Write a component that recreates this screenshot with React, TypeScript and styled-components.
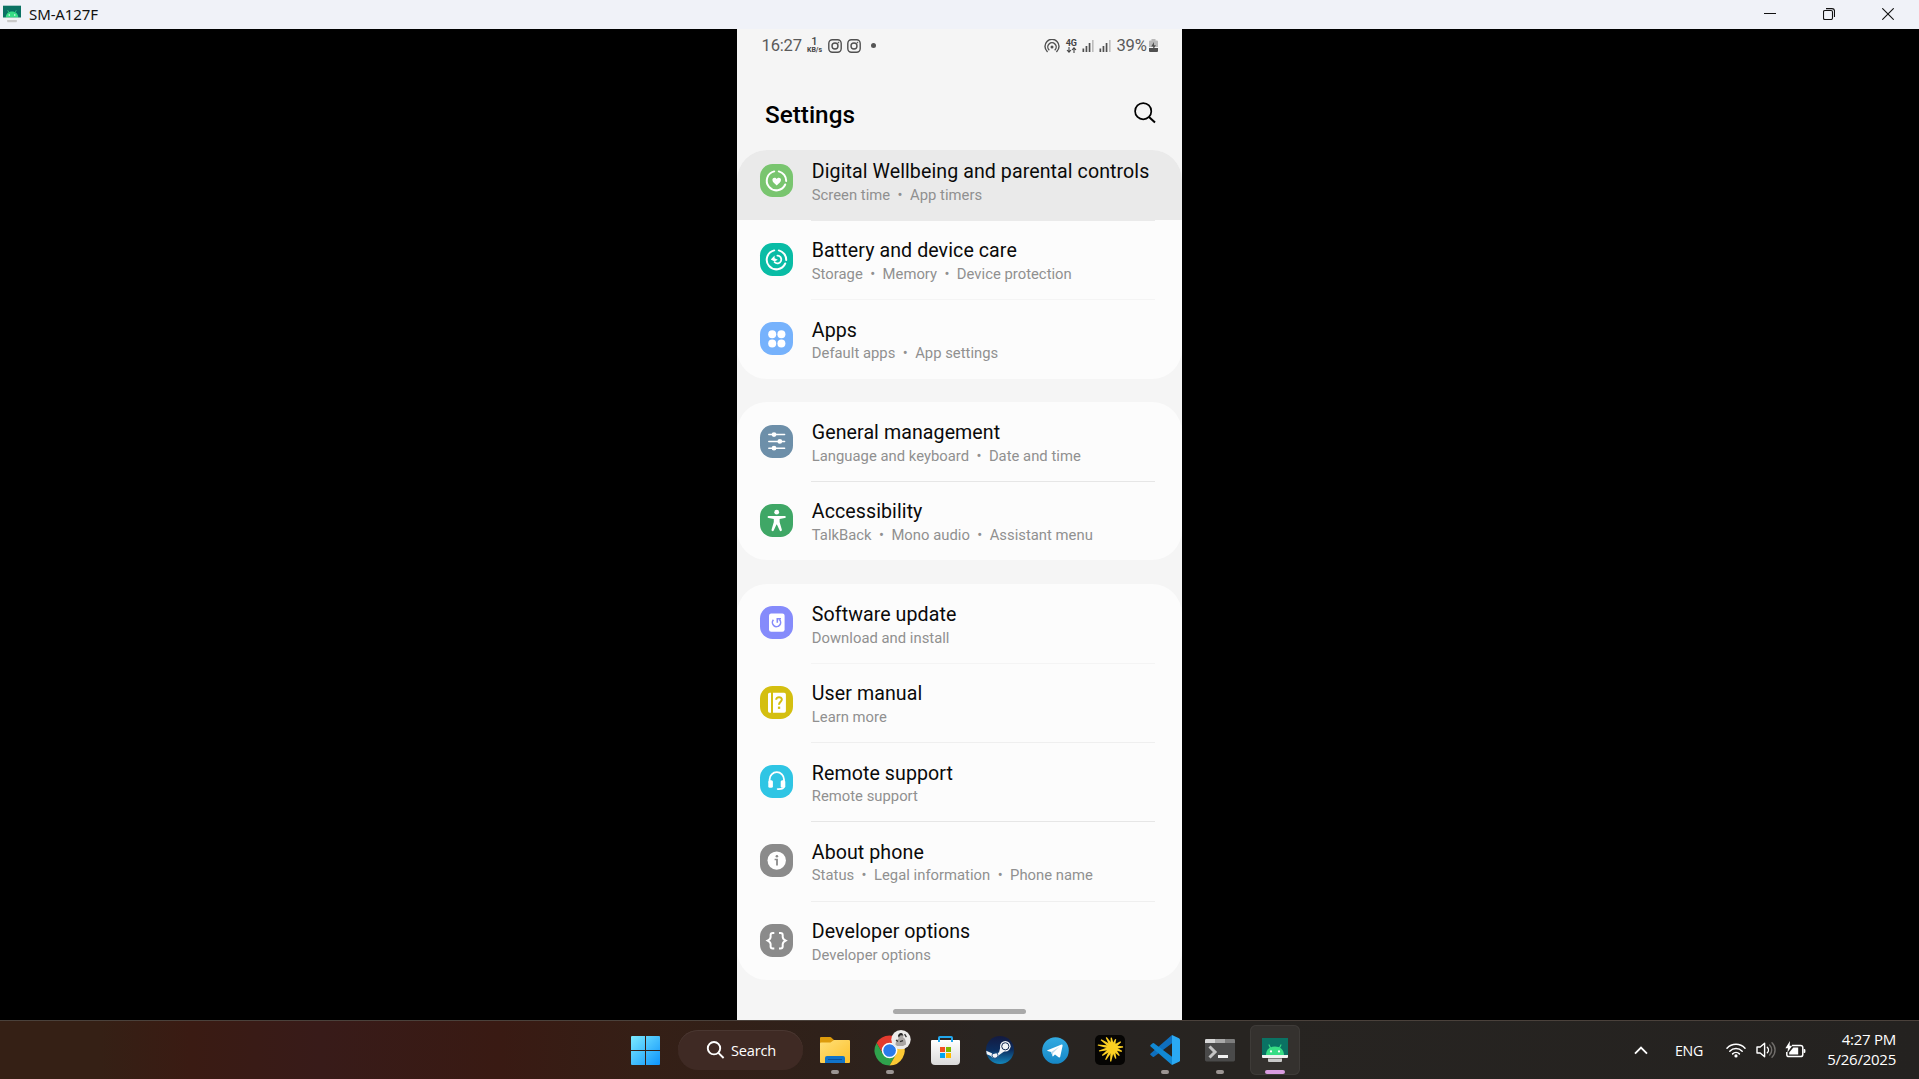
import React from 'react';
import styled, { createGlobalStyle } from 'styled-components';

const Global = createGlobalStyle`
  * { box-sizing: border-box; }
  html, body { margin: 0; padding: 0; background: #000; overflow: hidden; }
  svg { display: block; flex: none; }
`;

const Desktop = styled.div`
  width: 1919px;
  height: 1079px;
  display: flex;
  flex-direction: column;
  background: #000;
  font-family: "Open Sans", "Noto Sans", sans-serif;
`;

const TitleBar = styled.header`
  height: 29px;
  flex: none;
  display: flex;
  align-items: center;
  padding: 0 25px 1px 3px;
  background: #f0f2f8;
  color: #111;
`;
const WindowTitle = styled.span`
  margin-left: 8px;
  font-family: "Noto Sans", sans-serif;
  font-size: 15px;
  line-height: 20px;
  letter-spacing: -0.1px;
  flex: 1;
`;
const WindowControls = styled.div`
  display: flex;
  align-items: center;
  gap: 47px;
`;

const Stage = styled.main`
  flex: 1;
  min-height: 0;
  display: flex;
  justify-content: center;
`;
const Phone = styled.section`
  width: 445px;
  display: flex;
  flex-direction: column;
  background: #f5f5f5;
  font-family: Roboto, sans-serif;
`;

const StatusBar = styled.div`
  height: 33px;
  flex: none;
  display: flex;
  align-items: center;
  justify-content: space-between;
  padding: 0 24.5px 0 24.5px;
  color: #5a5a5a;
  font-size: 16.6px;
`;
const StatusGroup = styled.div<{ $gap: number }>`
  display: flex;
  align-items: center;
  gap: ${(p) => p.$gap}px;
`;
const Clock = styled.span`
  width: 40px;
  line-height: 20px;
  letter-spacing: -0.2px;
`;
const Percent = styled.span`
  line-height: 20px;
  letter-spacing: -0.3px;
`;
const Speed = styled.div`
  display: flex;
  flex-direction: column;
  align-items: center;
  width: 16px;
  font-weight: 500;
  color: #444;
`;
const SpeedValue = styled.span`
  font-size: 11px;
  line-height: 10px;
`;
const SpeedUnit = styled.span`
  font-size: 7px;
  font-weight: 700;
  line-height: 7px;
`;
const NetGroup = styled.div`
  display: flex;
  flex-direction: column;
  align-items: center;
  width: 11px;
  font-weight: 700;
  font-size: 9px;
  line-height: 8px;
  letter-spacing: -0.3px;
  color: #444;
`;
const Dot = styled.i`
  width: 5px;
  height: 5px;
  margin-left: 5.5px;
  border-radius: 50%;
  background: #555;
`;

const PageHeader = styled.div`
  height: 88px;
  flex: none;
  display: flex;
  align-items: center;
  justify-content: space-between;
  padding: 14px 26px 0 28px;
`;
const PageTitle = styled.h1`
  margin: 0;
  padding-top: 3px;
  font-size: 24.3px;
  font-weight: 500;
  line-height: 30px;
  color: #000;
`;

const Groups = styled.div`
  display: flex;
  flex-direction: column;
  gap: 23.2px;
`;
const Card = styled.div`
  overflow: hidden;
  border-radius: 30px;
  background: #fcfcfc;
`;
const Row = styled.div<{ $pressed?: boolean }>`
  height: ${(p) => (p.$pressed ? 70 : 79.3)}px;
  display: flex;
  align-items: flex-start;
  padding: ${(p) => (p.$pressed ? 14 : 22.8)}px 27.2px 0 23.4px;
  background: ${(p) => (p.$pressed ? '#eaeaea' : 'transparent')};
`;
const Tile = styled.div<{ $color: string }>`
  width: 33px;
  height: 33px;
  flex: none;
  border-radius: 12.5px;
  background: ${(p) => p.$color};
`;
const RowBody = styled.div<{ $line?: string; $pressed?: boolean }>`
  flex: 1;
  height: ${(p) => (p.$pressed ? 70 : 79.3)}px;
  margin: ${(p) => (p.$pressed ? -14 : -22.8)}px 0 0 17.6px;
  padding: ${(p) => (p.$pressed ? 9 : 18.4)}px 0 0 0.8px;
  white-space: nowrap;
  border-top: 1px solid ${(p) => p.$line || 'transparent'};
`;
const RowTitle = styled.div`
  font-size: 19.6px;
  line-height: 24px;
  letter-spacing: 0.08px;
  color: #0a0a0a;
`;
const RowHint = styled.div`
  font-size: 14.8px;
  line-height: 18px;
  letter-spacing: 0.02px;
  margin-top: 1.6px;
  color: #909090;
  display: flex;
`;
const Bullet = styled.span`
  width: 19.8px;
  text-align: center;
`;
const NavArea = styled.div`
  flex: 1;
  display: flex;
  align-items: flex-end;
  justify-content: center;
  padding-bottom: 6px;
`;
const NavHandle = styled.div`
  width: 133px;
  height: 5px;
  border-radius: 3px;
  background: #a9a9a9;
`;

const Taskbar = styled.footer`
  height: 59px;
  flex: none;
  display: flex;
  align-items: center;
  border-top: 1px solid #4a413b;
  background: linear-gradient(90deg, #352015 0, #352015 100px, #3a1b13 190px, #381b19 320px, #391a13 500px, #351f16 640px, #2f211a 820px, #292421 980px, #272421 1250px, #242220 1919px);
  color: #fff;
`;
const TaskCenter = styled.div`
  display: flex;
  align-items: center;
  margin-left: 618px;
`;
const TaskItem = styled.div<{ $active?: boolean }>`
  width: ${(p) => (p.$active ? 50 : 55)}px;
  margin-left: ${(p) => (p.$active ? 2.5 : 0)}px;
  height: 50px;
  flex: none;
  display: flex;
  align-items: center;
  justify-content: center;
  position: relative;
  border-radius: 6px;
  background: ${(p) => (p.$active ? '#34312e' : 'transparent')};
  box-shadow: ${(p) => (p.$active ? 'inset 0 0 0 1px #3e3b38' : 'none')};
`;
const Running = styled.i<{ $active?: boolean }>`
  position: absolute;
  bottom: 1px;
  left: 50%;
  transform: translateX(-50%);
  width: ${(p) => (p.$active ? 20 : 8)}px;
  height: 4px;
  border-radius: 2px;
  background: ${(p) => (p.$active ? '#d99ce0' : '#9c9593')};
`;
const SearchBox = styled.div`
  width: 125px;
  height: 40px;
  display: flex;
  align-items: center;
  gap: 6px;
  padding-left: 28px;
  margin: 0 4.5px 0 5px;
  border-radius: 20px;
  background: #3f2a24;
  box-shadow: inset 0 1px 0 #4a3731;
  font-size: 14.6px;
  letter-spacing: -0.2px;
`;
const Tray = styled.div`
  display: flex;
  align-items: center;
  margin-left: auto;
  padding-right: 23px;
`;
const Language = styled.span`
  margin: 0 21px 0 27px;
  width: 30px;
  font-size: 14.2px;
  letter-spacing: -0.3px;
`;
const TrayIcons = styled.div`
  display: flex;
  align-items: center;
  gap: 9.5px;
`;
const DateTime = styled.div`
  width: 90px;
  padding-bottom: 2px;
  text-align: right;
  font-size: 15px;
  line-height: 20px;
  letter-spacing: -0.25px;
`;

/* ---------- status bar glyphs ---------- */

const Insta = () => (
  <svg width="14" height="14" viewBox="0 0 14 14" fill="none" stroke="#505050" strokeWidth="1.4">
    <rect x="0.8" y="0.8" width="12.4" height="12.4" rx="3.6" />
    <circle cx="7" cy="7" r="3" />
    <circle cx="10.4" cy="3.6" r="0.5" fill="#505050" strokeWidth="0.6" />
  </svg>
);
const Hotspot = () => (
  <svg width="16" height="14" viewBox="0 0 16 14" fill="none" stroke="#505050" strokeWidth="1.4" strokeLinecap="round">
    <path d="M3.2 12.4A7 7 0 1 1 12.8 12.4" />
    <path d="M4.9 10.8A4.2 4.2 0 1 1 11.1 10.8" />
    <circle cx="8" cy="8" r="1.5" fill="#505050" stroke="none" />
  </svg>
);
const Arrows = () => (
  <svg width="11" height="6" viewBox="0 0 11 6" fill="none" stroke="#444" strokeWidth="1.1">
    <path d="M3 0V5M1 3L3 5.2L5 3M8 6V1M6 3L8 .8L10 3" />
  </svg>
);
const Signal = () => (
  <svg width="12" height="13" viewBox="0 0 12 13">
    <path d="M.5 9.5h1.7V13H.5zM3.6 7h1.7v6H3.6zM6.7 4h1.7v9H6.7z" fill="#505050" />
    <path d="M10 1h1.6v12H10z" fill="#bdbdbd" />
  </svg>
);
const PhoneBattery = () => (
  <svg width="9" height="13" viewBox="0 0 9 13">
    <path d="M2.5 0h4v1.5H8A1 1 0 0 1 9 2.5V8H0V2.5A1 1 0 0 1 1 1.5h1.5z" fill="#b9b9b9" />
    <path d="M0 9h9v3a1 1 0 0 1-1 1H1a1 1 0 0 1-1-1z" fill="#505050" />
    <path d="M5 3L2.2 7.4H4.2V10.5L6.9 6.2H5z" fill="#505050" />
  </svg>
);
const Magnifier = () => (
  <svg width="22" height="22" viewBox="0 0 22 22" fill="none" stroke="#000" strokeWidth="1.7">
    <circle cx="9.2" cy="9.2" r="8.1" />
    <path d="M15 15l6 5.6" strokeWidth="2" />
  </svg>
);

/* ---------- settings tiles, drawn on a 33px grid ---------- */

const tileArt: Record<string, React.ReactNode> = {
  wellbeing: (
    <g fill="none" stroke="#fff" strokeWidth="2">
      <path d="M14.2 7.4A9.6 9.6 0 1 0 25.2 20.5" strokeLinecap="round" />
      <path d="M18.8 7.4A9.6 9.6 0 0 1 26.2 17" strokeLinecap="round" />
      <path d="M16.7 21.4C14 19.2 12.4 17.8 12.4 15.8C12.4 13.4 15.5 12.8 16.7 15C17.9 12.8 21 13.4 21 15.8C21 17.8 19.4 19.2 16.7 21.4Z" fill="#fff" stroke="none" />
    </g>
  ),
  battery: (
    <g fill="none" stroke="#fff" strokeWidth="2">
      <path d="M14.2 7.4A9.6 9.6 0 1 0 25.2 20.5" strokeLinecap="round" />
      <path d="M18.8 7.4A9.6 9.6 0 0 1 26.2 17" strokeLinecap="round" />
      <path d="M17.4 12.6A3.9 3.9 0 1 1 14.6 19.2" strokeLinecap="round" strokeWidth="1.8" />
      <path d="M10.8 16.4L14.6 12.6V15.2L17.8 16.8L14.6 18.4Z" fill="#fff" stroke="none" />
    </g>
  ),
  apps: (
    <g fill="#fff">
      <circle cx="12.2" cy="12.3" r="4" />
      <circle cx="21.4" cy="12.3" r="4" />
      <circle cx="12.2" cy="21.5" r="4" />
      <circle cx="21.4" cy="21.5" r="4" />
    </g>
  ),
  general: (
    <g stroke="#fff" strokeWidth="1.5" strokeLinecap="round" fill="#fff">
      <path d="M8.8 9.6H24.6M8.8 16.4H24.6M8.8 23.2H24.6" />
      <g stroke="none">
        <circle cx="14" cy="9.6" r="2.4" />
        <circle cx="19.8" cy="16.4" r="2.4" />
        <circle cx="14" cy="23.2" r="2.4" />
      </g>
    </g>
  ),
  access: (
    <g fill="#fff">
      <circle cx="16.7" cy="8.2" r="2.4" />
      <path d="M8.6 12H24.8a.9.9 0 0 1 0 2L19.6 15V18L21.8 25.6a1.1 1.1 0 0 1-2.1.8L16.9 20.6H16.5L13.7 26.4a1.1 1.1 0 0 1-2.1-.8L13.8 18V15L8.6 14a.9.9 0 0 1 0-2Z" />
    </g>
  ),
  update: (
    <g>
      <rect x="9" y="7.6" width="15.6" height="18.2" rx="2.2" fill="#fff" />
      <g fill="none" stroke="#858bfb" strokeWidth="1.6">
        <path d="M13.4 13.8A4.1 4.1 0 1 0 19.2 13.4" />
        <path d="M21 12.8H17.3V16.8" />
      </g>
    </g>
  ),
  manual: (
    <g>
      <path d="M9.6 6.7H11V26.7H9.6a1.6 1.6 0 0 1-1.6-1.6V8.3a1.6 1.6 0 0 1 1.6-1.6Z" fill="#fff" />
      <path d="M13 6.7H24.2A1.7 1.7 0 0 1 25.9 8.4V25a1.7 1.7 0 0 1-1.7 1.7H13Z" fill="#fff" />
      <path d="M16.2 13.8C16.2 10.2 22 10.4 21.8 13.8C21.7 15.8 19 16 19 18.8" fill="none" stroke="#d4bf10" strokeWidth="2" />
      <rect x="17.9" y="20.6" width="2.3" height="2.3" fill="#d4bf10" />
    </g>
  ),
  remote: (
    <g fill="none" stroke="#fff" strokeWidth="1.8">
      <path d="M9.6 18V14.4A7.2 7.2 0 0 1 24 14.4V18" />
      <path d="M24.2 21C24 23.6 22.6 24.2 17.6 24.1" strokeWidth="1.6" strokeLinecap="round" />
      <rect x="8.3" y="15.2" width="4.6" height="7.6" rx="1.6" fill="#fff" stroke="none" />
      <rect x="20.7" y="15.2" width="4.6" height="7.6" rx="1.6" fill="#fff" stroke="none" />
    </g>
  ),
  about: (
    <g>
      <circle cx="16.7" cy="16.6" r="9.2" fill="#fff" />
      <g fill="#8b8b8b">
        <circle cx="16.9" cy="12.2" r="1.3" />
        <path d="M14.6 14.8H17.9V21.6H16.1V16.3H14.6Z" />
      </g>
    </g>
  ),
  developer: (
    <g fill="none" stroke="#fff" strokeWidth="2">
      <path d="M14.3 8.9H12.8Q10.6 8.9 10.6 11V13Q10.6 15 7.6 16.6Q10.6 18.2 10.6 20.2V22.4Q10.6 24.4 12.8 24.4H14.3" />
      <path d="M19 8.9H20.5Q22.7 8.9 22.7 11V13Q22.7 15 25.7 16.6Q22.7 18.2 22.7 20.2V22.4Q22.7 24.4 20.5 24.4H19" />
    </g>
  ),
};

/* ---------- taskbar logos ---------- */

const AndroidScreen = ({ size }: { size: number }) => (
  <svg width={size} height={size} viewBox="0 0 26 26">
    <rect x="0" y="1" width="26" height="18" fill="#0a7263" />
    <path d="M4 18C4 12.5 8 9.4 13 9.4S22 12.5 22 18Z" fill="#37dd85" />
    <path d="M6.8 7.6L8.6 11M19.2 7.6L17.4 11" stroke="#37dd85" strokeWidth="1.1" />
    <circle cx="9" cy="14.4" r="1.1" fill="#fff" />
    <circle cx="17" cy="14.4" r="1.1" fill="#fff" />
    <path d="M0 18H26V20A1 1 0 0 1 25 21H1A1 1 0 0 1 0 20Z" fill="#f1f1f1" />
    <path d="M6 21.5H20V24A1 1 0 0 1 19 25H7A1 1 0 0 1 6 24Z" fill="#c9c9c9" />
  </svg>
);
const WindowsLogo = () => (
  <svg width="29" height="29" viewBox="0 0 29 29">
    <defs>
      <linearGradient id="win" x1="0" y1="0" x2="29" y2="29" gradientUnits="userSpaceOnUse">
        <stop offset="0" stopColor="#7cebff" />
        <stop offset="1" stopColor="#0d93fb" />
      </linearGradient>
    </defs>
    <path d="M1 0H14V14H0V1A1 1 0 0 1 1 0ZM15 0H28A1 1 0 0 1 29 1V14H15ZM0 15H14V29H1A1 1 0 0 1 0 28ZM15 15H29V28A1 1 0 0 1 28 29H15Z" fill="url(#win)" />
  </svg>
);
const Explorer = () => (
  <svg width="30" height="26" viewBox="0 0 30 26">
    <defs>
      <linearGradient id="fold" x1="0" y1="0" x2="1" y2="1">
        <stop offset="0" stopColor="#ffdf78" />
        <stop offset="1" stopColor="#fdc12c" />
      </linearGradient>
    </defs>
    <path d="M0 1A1 1 0 0 1 1 0H10Q11 0 12 1.2L14 3H29V8H0Z" fill="#dd9b0c" />
    <path d="M0 6.5Q0 5.5 1 5.5H10.5L14 3H29A1 1 0 0 1 30 4V25A1 1 0 0 1 29 26H1A1 1 0 0 1 0 25Z" fill="url(#fold)" />
    <path d="M5 26V21A2 2 0 0 1 7 19H23A2 2 0 0 1 25 21V26Z" fill="#1173c8" />
    <path d="M8 22.5H22" stroke="#0b519b" strokeWidth="1" />
  </svg>
);
const Chrome = () => (
  <svg width="42" height="42" viewBox="-4 -0.6 42 42">
    <path d="M3.6 13.4A15 15 0 0 1 29.6 13.4H16.6L10.1 24.65Z" fill="#e33b2e" />
    <path d="M3.6 13.4A15 15 0 0 0 16.6 35.9L23.1 24.65H10.1Z" fill="#2fa24c" />
    <path d="M29.6 13.4A15 15 0 0 1 16.6 35.9L23.1 24.65L16.6 13.4Z" fill="#fcc934" />
    <circle cx="16.6" cy="20.9" r="7.8" fill="#fff" />
    <circle cx="16.6" cy="20.9" r="6.3" fill="#2b7bea" />
    <circle cx="28" cy="10" r="9.7" fill="#ecebea" />
    <path d="M25.4 6Q26.4 3 29 3.4Q31 4.4 30.2 8Q33 9 33 15L30 16.5H24L22.4 15Q23 10.4 25.6 9Z" fill="#aaa6a4" />
    <path d="M25 6Q26 2.6 29 3.6L30.4 6L27.6 5.6L25.6 8Z" fill="#252525" />
    <path d="M31.6 4.5L33.4 7.5M23 10.5L25 12M27 12L30 11" stroke="#333" strokeWidth="1.3" />
  </svg>
);
const Store = () => (
  <svg width="29" height="29" viewBox="0 0 29 29">
    <defs>
      <linearGradient id="bag" x1="0" y1="0" x2="0" y2="1">
        <stop offset="0" stopColor="#fff" />
        <stop offset="1" stopColor="#dadada" />
      </linearGradient>
    </defs>
    <path d="M0 5A1 1 0 0 1 1 4H28A1 1 0 0 1 29 5V25A4 4 0 0 1 25 29H4A4 4 0 0 1 0 25Z" fill="url(#bag)" />
    <path d="M8 6V1.8Q8 1 8.8 1H20.2Q21 1 21 1.8V6" fill="none" stroke="#22a7ec" strokeWidth="2" />
    <path d="M9 11h5v5H9z" fill="#f25022" />
    <path d="M15 11h5v5H15z" fill="#7fba00" />
    <path d="M9 17h5v5H9z" fill="#00a4ef" />
    <path d="M15 17h5v5H15z" fill="#ffb900" />
  </svg>
);
const Steam = () => (
  <svg width="28" height="28" viewBox="0 0 28 28">
    <defs>
      <linearGradient id="stm" x1="0" y1="0" x2="0" y2="1">
        <stop offset="0" stopColor="#141a40" />
        <stop offset="0.5" stopColor="#0c2d5e" />
        <stop offset="1" stopColor="#1387bd" />
      </linearGradient>
    </defs>
    <circle cx="14" cy="14" r="14" fill="url(#stm)" />
    <path d="M.2 14.8L7.6 17.9L13 16.4L14.4 11L19.5 14.5L12.8 19.2A4.2 4.2 0 0 1 5 20L.8 18.2Z" fill="#f3f5f7" />
    <circle cx="19.3" cy="10.3" r="5.3" fill="#f3f5f7" />
    <circle cx="19.3" cy="10.3" r="3.6" fill="none" stroke="#14284f" strokeWidth="1" />
    <circle cx="9" cy="19.3" r="3" fill="none" stroke="#14447a" strokeWidth="0.9" />
  </svg>
);
const Telegram = () => (
  <svg width="27" height="27" viewBox="0 0 27 27">
    <defs>
      <linearGradient id="tg" x1="0" y1="0" x2="0" y2="1">
        <stop offset="0" stopColor="#33abe2" />
        <stop offset="1" stopColor="#1687c6" />
      </linearGradient>
    </defs>
    <circle cx="13.5" cy="13.5" r="13.3" fill="url(#tg)" />
    <path d="M5.4 13.2L19.6 7.6Q20.8 7.4 20.6 8.8L18.2 19.8Q17.8 21 16.6 20.2L13 17.5L11.2 19.3Q10.6 19.8 10.4 18.8L9.2 15L5.6 13.9Q4.8 13.5 5.4 13.2Z" fill="#fff" />
    <path d="M9.2 15L17.3 9.8L11 15.9L10.6 19.2Z" fill="#b9d9ec" />
  </svg>
);

/* angle and length of each spike, clockwise from the right */
const rays: [number, number][] = [
  [-4, 10.5], [22, 10], [50, 10.5], [74, 11.5], [98, 14], [120, 14], [143, 13],
  [166, 14], [190, 15], [214, 14], [238, 12], [262, 10], [290, 9], [325, 10],
];
const Burst = () => (
  <svg width="30" height="30" viewBox="0 0 30 30">
    <rect width="30" height="30" rx="5" fill="#050403" />
    <g transform="translate(17.6 12.6)" fill="#fbcf22">
      <circle r="5.2" />
      {rays.map(([angle, length]) => (
        <path key={angle} d={`M0 -2L${length} -0.6V0.6L0 2Z`} transform={`rotate(${angle})`} />
      ))}
    </g>
  </svg>
);
const VsCode = () => (
  <svg width="30" height="30" viewBox="0 0 30 30">
    <path d="M22 0L29 3.2Q30 3.7 30 4.8V25.2Q30 26.3 29 26.8L22 30Z" fill="#2aa9f3" />
    <path d="M22 0V8.2L4 21.8Q3.4 22.3 2.7 21.8L.6 20Q-.2 19.2 .6 18.5Z" fill="#0f6fbe" />
    <path d="M22 30V21.8L4 8.2Q3.4 7.7 2.7 8.2L.6 10Q-.2 10.8 .6 11.5Z" fill="#1189d4" />
  </svg>
);
const Terminal = () => (
  <svg width="30" height="23" viewBox="0 0 30 23">
    <rect width="30" height="22.5" rx="1.4" fill="#4a4a4a" />
    <path d="M1.4 0H10V4H0V1.4A1.4 1.4 0 0 1 1.4 0Z" fill="#d6d6d6" />
    <path d="M10 0H20V4H10Z" fill="#a8a8a8" />
    <path d="M20 0H28.6A1.4 1.4 0 0 1 30 1.4V4H20Z" fill="#7d7d7d" />
    <path d="M4.5 7.5L10 13L4.5 18.5" fill="none" stroke="#c4c4c4" strokeWidth="3" />
    <path d="M13 16H23V19H13Z" fill="#f2f2f2" />
  </svg>
);
const TaskSearch = () => (
  <svg width="19" height="18" viewBox="0 0 19 18" fill="none" stroke="#fff" strokeWidth="1.9">
    <circle cx="8" cy="7.2" r="6.2" />
    <path d="M12.4 11.8L17.6 17" />
  </svg>
);
const Chevron = () => (
  <svg width="14" height="9" viewBox="0 0 14 9" fill="none" stroke="#fff" strokeWidth="1.9">
    <path d="M1 7.6L7 1.6L13 7.6" />
  </svg>
);
const Wifi = () => (
  <svg width="20" height="16" viewBox="0 0 20 16" fill="none" stroke="#fff" strokeWidth="1.5" strokeLinecap="round">
    <path d="M1 6.2A12.5 12.5 0 0 1 19 6.2" />
    <path d="M3.8 9.2A8.7 8.7 0 0 1 16.2 9.2" />
    <path d="M6.6 11.9A4.9 4.9 0 0 1 13.4 11.9" />
    <circle cx="10" cy="13.9" r="1.6" fill="#fff" stroke="none" />
  </svg>
);
const Speaker = () => (
  <svg width="20" height="18" viewBox="0 0 20 18" fill="none" stroke="#fff" strokeWidth="1.4" strokeLinecap="round" strokeLinejoin="round">
    <path d="M1 6H4.2L8.6 2.2V15.8L4.2 12H1Z" />
    <path d="M11.3 6.2A4 4 0 0 1 11.3 11.8" />
    <path d="M13.6 4A7 7 0 0 1 13.6 14M16 1.8A10 10 0 0 1 16 16.2" stroke="#716e6b" />
  </svg>
);
const Battery = () => (
  <svg width="21" height="18" viewBox="0 0 21 18">
    <path d="M7 4.4H15.6Q17.8 4.4 17.8 6.6V13.4Q17.8 15.6 15.6 15.6H4Q1.8 15.6 1.8 13.4V11" fill="none" stroke="#fff" strokeWidth="1.5" />
    <path d="M18.6 8H19.4Q20.4 8 20.4 9V11Q20.4 12 19.4 12H18.6Z" fill="#fff" />
    <path d="M8.3 6.6H13.2V13.4H4.2V11.4Z" fill="#fff" />
    <path d="M5 0L.4 7.2H3L2.4 11.4L7.2 4.8H4.6Z" fill="#fff" />
  </svg>
);

type Entry = { art: string; color: string; title: string; hint: string[]; line?: string; pressed?: boolean };

const groups: Entry[][] = [
  [
    { art: 'wellbeing', color: '#79c56f', title: 'Digital Wellbeing and parental controls', hint: ['Screen time', 'App timers'], pressed: true },
    { art: 'battery', color: '#09bca5', title: 'Battery and device care', hint: ['Storage', 'Memory', 'Device protection'], line: '#eaeaea' },
    { art: 'apps', color: '#76b2fc', title: 'Apps', hint: ['Default apps', 'App settings'], line: '#f4f4f4' },
  ],
  [
    { art: 'general', color: '#6d8fa9', title: 'General management', hint: ['Language and keyboard', 'Date and time'] },
    { art: 'access', color: '#3fa766', title: 'Accessibility', hint: ['TalkBack', 'Mono audio', 'Assistant menu'], line: '#e6e6e6' },
  ],
  [
    { art: 'update', color: '#858bfb', title: 'Software update', hint: ['Download and install'] },
    { art: 'manual', color: '#d4bf10', title: 'User manual', hint: ['Learn more'], line: '#f4f4f4' },
    { art: 'remote', color: '#2fc5e4', title: 'Remote support', hint: ['Remote support'], line: '#efefef' },
    { art: 'about', color: '#8b8b8b', title: 'About phone', hint: ['Status', 'Legal information', 'Phone name'], line: '#e6e6e6' },
    { art: 'developer', color: '#8b8b8b', title: 'Developer options', hint: ['Developer options'], line: '#efefef' },
  ],
];

const SettingRow = ({ art, color, title, hint, line, pressed }: Entry) => (
  <Row $pressed={pressed}>
    <Tile $color={color}>
      <svg width="33" height="33" viewBox="0 0 33 33">{tileArt[art]}</svg>
    </Tile>
    <RowBody $line={line} $pressed={pressed}>
      <RowTitle>{title}</RowTitle>
      <RowHint>
        {hint.map((h, i) => (
          <React.Fragment key={h}>
            {i > 0 && <Bullet>•</Bullet>}
            <span>{h}</span>
          </React.Fragment>
        ))}
      </RowHint>
    </RowBody>
  </Row>
);

export default function App() {
  return (
    <Desktop>
      <Global />
      <TitleBar>
        <AndroidScreen size={18} />
        <WindowTitle>SM-A127F</WindowTitle>
        <WindowControls>
          <svg width="12" height="12" viewBox="0 0 12 12"><path d="M0 5.5H12" stroke="#111" /></svg>
          <svg width="12" height="12" viewBox="0 0 12 12" fill="none" stroke="#111" strokeWidth="1.1">
            <rect x="0.5" y="2.5" width="9" height="9" rx="1.4" />
            <path d="M3 .6H9A2.5 2.5 0 0 1 11.5 3.1V9" />
          </svg>
          <svg width="12" height="12" viewBox="0 0 12 12"><path d="M.3 .3L11.7 11.7M11.7 .3L.3 11.7" stroke="#111" strokeWidth="1.1" /></svg>
        </WindowControls>
      </TitleBar>

      <Stage>
        <Phone>
          <StatusBar>
            <StatusGroup $gap={5}>
              <Clock>16:27</Clock>
              <Speed>
                <SpeedValue>1</SpeedValue>
                <SpeedUnit>KB/s</SpeedUnit>
              </Speed>
              <Insta />
              <Insta />
              <Dot />
            </StatusGroup>
            <StatusGroup $gap={5.3}>
              <Hotspot />
              <NetGroup>
                4G
                <Arrows />
              </NetGroup>
              <Signal />
              <Signal />
              <StatusGroup $gap={2}>
                <Percent>39%</Percent>
                <PhoneBattery />
              </StatusGroup>
            </StatusGroup>
          </StatusBar>
          <PageHeader>
            <PageTitle>Settings</PageTitle>
            <Magnifier />
          </PageHeader>
          <Groups>
            {groups.map((g, i) => (
              <Card key={i}>
                {g.map((e) => <SettingRow key={e.title} {...e} />)}
              </Card>
            ))}
          </Groups>
          <NavArea><NavHandle /></NavArea>
        </Phone>
      </Stage>

      <Taskbar>
        <TaskCenter>
          <TaskItem><WindowsLogo /></TaskItem>
          <SearchBox><TaskSearch />Search</SearchBox>
          <TaskItem><Explorer /><Running /></TaskItem>
          <TaskItem><Chrome /><Running /></TaskItem>
          <TaskItem><Store /></TaskItem>
          <TaskItem><Steam /></TaskItem>
          <TaskItem><Telegram /></TaskItem>
          <TaskItem><Burst /></TaskItem>
          <TaskItem><VsCode /><Running /></TaskItem>
          <TaskItem><Terminal /><Running /></TaskItem>
          <TaskItem $active><AndroidScreen size={26} /><Running $active /></TaskItem>
        </TaskCenter>
        <Tray>
          <Chevron />
          <Language>ENG</Language>
          <TrayIcons><Wifi /><Speaker /><Battery /></TrayIcons>
          <DateTime>
            <div>4:27 PM</div>
            <div>5/26/2025</div>
          </DateTime>
        </Tray>
      </Taskbar>
    </Desktop>
  );
}
